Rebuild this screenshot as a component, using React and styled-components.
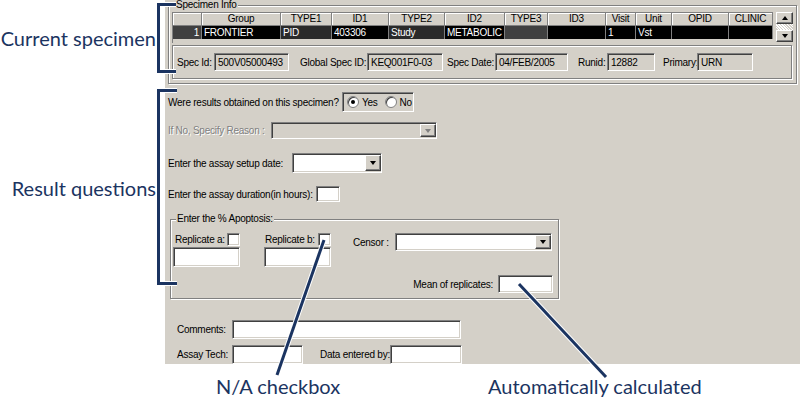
import React from "react";
import styled, { createGlobalStyle, css } from "styled-components";

const GlobalStyle = createGlobalStyle`
  html, body { margin: 0; padding: 0; background: #fff; }
  #root { width: 800px; height: 399px; overflow: hidden; }
  * { box-sizing: border-box; }
`;

const NAVY = "#1b3461";
const FACE = "#d4d0c8";

const Screen = styled.div`
  position: relative;
  width: 800px;
  height: 399px;
  display: grid;
  grid-template-columns: 165px 635px;
  grid-template-rows: 364px 35px;
  background: #fff;
`;

const LeftNotes = styled.div`
  display: flex;
  flex-direction: column;
  align-items: flex-end;
  padding-right: 9px;
`;

const Note = styled.div`
  font-family: Lato, "Open Sans", sans-serif;
  font-size: 20px;
  line-height: 21px;
  color: ${NAVY};
  white-space: nowrap;
  margin-top: ${(p) => p.$top || 0}px;
  width: ${(p) => (p.$w ? p.$w + "px" : "auto")};
`;

const BottomNotes = styled.div`
  grid-column: 1 / span 2;
  display: flex;
  padding-left: 216px;
  padding-top: 12px;
`;

const Panel = styled.div`
  background: ${FACE};
  padding-left: 3px;
  display: flex;
  flex-direction: column;
  font-family: "Liberation Sans", Arial, sans-serif;
  font-size: 10px;
  letter-spacing: -0.25px;
  color: #000;
`;

const Group = styled.div`
  position: relative;
  border: 1px solid #808080;
  box-shadow: inset 1px 1px #fff, 1px 1px #fff;
  margin-top: ${(p) => p.$top || 0}px;
  margin-left: ${(p) => p.$left || 0}px;
  width: ${(p) => p.$w}px;
  height: ${(p) => p.$h}px;
  padding: ${(p) => p.$pad};
`;

const Legend = styled.span`
  position: absolute;
  top: -7px;
  left: ${(p) => p.$left || 6}px;
  background: ${FACE};
  padding: 0 1px;
  line-height: 12px;
`;

/* ---------- grid ---------- */
const GridWrap = styled.div`
  display: flex;
  width: 622px;
  height: 31px;
`;

const GridBody = styled.div`
  width: 601px;
  height: 31px;
  border-left: 1px solid #808080;
  border-top: 1px solid #808080;
  display: flex;
  flex-direction: column;
`;

const GridRow = styled.div`
  display: grid;
  grid-template-columns: 29px 79px 51px 57px 56px 60px 43px 58px 30px 36px 57px 44px;
  height: 13px;
`;

const HeadCell = styled.div`
  background: ${FACE};
  border-right: 1px solid #808080;
  border-bottom: 1px solid #808080;
  box-shadow: inset 1px 1px #fff;
  text-align: center;
  line-height: 12px;
  white-space: nowrap;
  overflow: hidden;
`;

const DataCell = styled.div`
  background: ${(p) => p.$bg || "#000"};
  color: #fff;
  border-right: 1px solid #808080;
  line-height: 13px;
  padding: 0 2px;
  text-align: ${(p) => p.$align || "left"};
  white-space: nowrap;
  overflow: hidden;
`;

const ScrollBar = styled.div`
  margin-left: 3px;
  width: 17px;
  height: 30px;
  display: flex;
  flex-direction: column;
  justify-content: space-between;
  background: repeating-linear-gradient(45deg, #fff 0 1px, ${FACE} 1px 2px);
`;

const RaisedBtn = styled.div`
  background: ${FACE};
  border: 1px solid;
  border-color: #fff #404040 #404040 #fff;
  box-shadow: inset -1px -1px #808080;
  display: flex;
  align-items: center;
  justify-content: center;
  width: ${(p) => p.$w || 17}px;
  height: ${(p) => p.$h || 12}px;
  flex: none;
`;

const Tri = styled.span`
  width: 0;
  height: 0;
  border-left: 3.5px solid transparent;
  border-right: 3.5px solid transparent;
  ${(p) =>
    p.$up
      ? css`border-bottom: 4px solid ${p.$c || "#000"};`
      : css`border-top: 4px solid ${p.$c || "#000"};`}
`;

/* ---------- fields ---------- */
const Sunken = styled.div`
  flex: none;
  width: ${(p) => p.$w}px;
  height: ${(p) => p.$h || 19}px;
  background: ${(p) => (p.$gray ? FACE : "#fff")};
  border: 1px solid;
  border-color: #808080 #fff #fff #808080;
  box-shadow: inset 1px 1px #404040, inset -1px -1px ${FACE};
  padding: 0 3px;
  display: flex;
  align-items: center;
  justify-content: space-between;
  white-space: nowrap;
  overflow: hidden;
`;

const ComboBtn = styled(RaisedBtn)`
  margin-right: -2px;
`;

const Label = styled.span`
  flex: none;
  width: ${(p) => (p.$w ? p.$w + "px" : "auto")};
  margin-left: ${(p) => p.$ml || 0}px;
  white-space: nowrap;
  ${(p) =>
    p.$disabled &&
    css`
      color: #808080;
      text-shadow: 1px 1px #fff;
    `}
`;

const Row = styled.div`
  display: flex;
  align-items: center;
  margin-top: ${(p) => p.$top || 0}px;
  padding-left: ${(p) => p.$pl || 0}px;
  justify-content: ${(p) => p.$justify || "flex-start"};
  padding-right: ${(p) => p.$pr || 0}px;
`;

const SpecPanel = styled.div`
  margin-top: 2px;
  width: 620px;
  height: 34px;
  border: 1px solid #808080;
  box-shadow: inset 1px 1px #fff, 1px 1px #fff;
  display: flex;
  align-items: center;
  padding-left: 4px;
`;

const RadioBox = styled.div`
  flex: none;
  width: 72px;
  height: 20px;
  border: 1px solid;
  border-color: #808080 #fff #fff #808080;
  box-shadow: inset 1px 1px #404040, inset -1px -1px ${FACE};
  display: flex;
  align-items: center;
  padding-left: 4px;
  gap: 3px;
`;

const Radio = styled.span`
  flex: none;
  width: 12px;
  height: 12px;
  border-radius: 50%;
  background: #fff;
  border: 1px solid #808080;
  box-shadow: inset 1px 1px #404040;
  display: flex;
  align-items: center;
  justify-content: center;
  margin-left: ${(p) => p.$ml || 0}px;
  &::after {
    content: "";
    width: 4px;
    height: 4px;
    border-radius: 50%;
    background: ${(p) => (p.$on ? "#000" : "transparent")};
  }
`;

const Check = styled.span`
  flex: none;
  width: 13px;
  height: 13px;
  background: #fff;
  border: 1px solid;
  border-color: #808080 #fff #fff #808080;
  box-shadow: inset 1px 1px #404040, inset -1px -1px ${FACE};
`;

const Column = styled.div`
  display: flex;
  flex-direction: column;
  margin-left: ${(p) => p.$ml || 0}px;
`;

const ApopTop = styled.div`
  display: flex;
  align-items: flex-start;
`;

const Overlay = styled.svg`
  position: absolute;
  left: 0;
  top: 0;
  pointer-events: none;
`;

const columns = ["", "Group", "TYPE1", "ID1", "TYPE2", "ID2", "TYPE3", "ID3", "Visit", "Unit", "OPID", "CLINIC"];
const dataRow = [
  { v: "1", bg: "#404040", align: "right" },
  { v: "FRONTIER" },
  { v: "PID", bg: "#2a2a2a" },
  { v: "403306" },
  { v: "Study", bg: "#2a2a2a" },
  { v: "METABOLIC" },
  { v: "", bg: "#404040" },
  { v: "" },
  { v: "1" },
  { v: "Vst" },
  { v: "" },
  { v: "" },
];

const specFields = [
  { label: "Spec Id:", lw: 37, w: 75, value: "500V05000493", ml: 0 },
  { label: "Global Spec ID:", lw: 67, w: 76, value: "KEQ001F0-03", ml: 11 },
  { label: "Spec Date:", lw: 48, w: 73, value: "04/FEB/2005", ml: 4 },
  { label: "Runid:", lw: 29, w: 48, value: "12882", ml: 10 },
  { label: "Primary:", lw: 34, w: 56, value: "URN", ml: 8 },
];

function Combo({ w, h = 20, disabled }) {
  return (
    <Sunken $w={w} $h={h} $gray={disabled} style={{ paddingRight: 2 }}>
      <span />
      <ComboBtn $w={16} $h={h - 4}>
        <Tri $c={disabled ? "#808080" : "#000"} />
      </ComboBtn>
    </Sunken>
  );
}

export default function App() {
  return (
    <>
      <GlobalStyle />
      <Screen>
        <LeftNotes>
          <Note $top={28}>Current specimen</Note>
          <Note $top={129}>Result questions</Note>
        </LeftNotes>

        <Panel>
          <Group $top={5} $w={629} $h={80} $pad="6px 0 0 3px">
            <Legend $left={6}>Specimen Info</Legend>
            <GridWrap>
              <GridBody>
                <GridRow>
                  {columns.map((c, i) => (
                    <HeadCell key={i}>{c}</HeadCell>
                  ))}
                </GridRow>
                <GridRow>
                  {dataRow.map((d, i) => (
                    <DataCell key={i} $bg={d.bg} $align={d.align}>
                      {d.v}
                    </DataCell>
                  ))}
                </GridRow>
              </GridBody>
              <ScrollBar>
                <RaisedBtn $h={12}>
                  <Tri $up />
                </RaisedBtn>
                <RaisedBtn $h={12}>
                  <Tri />
                </RaisedBtn>
              </ScrollBar>
            </GridWrap>
            <SpecPanel>
              {specFields.map((f) => (
                <React.Fragment key={f.label}>
                  <Label $w={f.lw} $ml={f.ml}>
                    {f.label}
                  </Label>
                  <Sunken $w={f.w} $h={18} $gray>
                    {f.value}
                  </Sunken>
                </React.Fragment>
              ))}
            </SpecPanel>
          </Group>

          <Row $top={8}>
            <Label $w={174}>Were results obtained on this specimen?</Label>
            <RadioBox>
              <Radio $on />
              <span>Yes</span>
              <Radio $ml={4} />
              <span>No</span>
            </RadioBox>
          </Row>

          <Row $top={10}>
            <Label $w={103} $disabled>
              If No, Specify Reason :
            </Label>
            <Combo w={166} h={17} disabled />
          </Row>

          <Row $top={14}>
            <Label $w={124}>Enter the assay setup date:</Label>
            <Combo w={90} h={20} />
          </Row>

          <Row $top={13}>
            <Label $w={148}>Enter the assay duration(in hours):</Label>
            <Sunken $w={24} $h={16} />
          </Row>

          <Group $top={17} $left={2} $w={389} $h={80} $pad="13px 0 0 2px">
            <Legend $left={5}>Enter the % Apoptosis:</Legend>
            <ApopTop>
              <Column>
                <Row $pl={2}>
                  <Label $w={52}>Replicate a:</Label>
                  <Check />
                </Row>
                <Sunken $w={67} $h={20} style={{ marginTop: 1 }} />
              </Column>
              <Column $ml={24}>
                <Row $pl={1}>
                  <Label $w={53}>Replicate b:</Label>
                  <Check />
                </Row>
                <Sunken $w={67} $h={20} style={{ marginTop: 1 }} />
              </Column>
              <Column $ml={22}>
                <Row>
                  <Label $w={42}>Censor :</Label>
                  <Combo w={157} h={18} />
                </Row>
              </Column>
            </ApopTop>
            <Row $top={8} $justify="flex-end" $pr={5}>
              <Label>Mean of replicates:</Label>
              <Sunken $w={55} $h={18} style={{ marginLeft: 5 }} />
            </Row>
          </Group>

          <Row $top={21} $pl={9}>
            <Label $w={55}>Comments:</Label>
            <Sunken $w={229} $h={19} />
          </Row>
          <Row $top={6} $pl={9}>
            <Label $w={55}>Assay Tech:</Label>
            <Sunken $w={71} $h={19} />
            <Label $w={70} $ml={17}>
              Data entered by:
            </Label>
            <Sunken $w={72} $h={19} />
          </Row>
        </Panel>

        <BottomNotes>
          <Note $w={272}>N/A checkbox</Note>
          <Note>Automatically calculated</Note>
        </BottomNotes>

        <Overlay width="800" height="399" viewBox="0 0 800 399">
          <g fill="none" stroke="#fff" strokeWidth="5" strokeLinejoin="miter">
            <path d="M176 4.5 H158.5 V71.5 H176" />
            <path d="M177 90.5 H158.5 V283.5 H177" />
            <path d="M324 240 L277 375" />
            <path d="M519 284 L606 377" />
          </g>
          <g fill="none" stroke={NAVY} strokeWidth="3" strokeLinejoin="miter">
            <path d="M176 4.5 H158.5 V71.5 H176" />
            <path d="M177 90.5 H158.5 V283.5 H177" />
            <path d="M324 240 L277 375" />
            <path d="M519 284 L606 377" />
          </g>
        </Overlay>
      </Screen>
    </>
  );
}
